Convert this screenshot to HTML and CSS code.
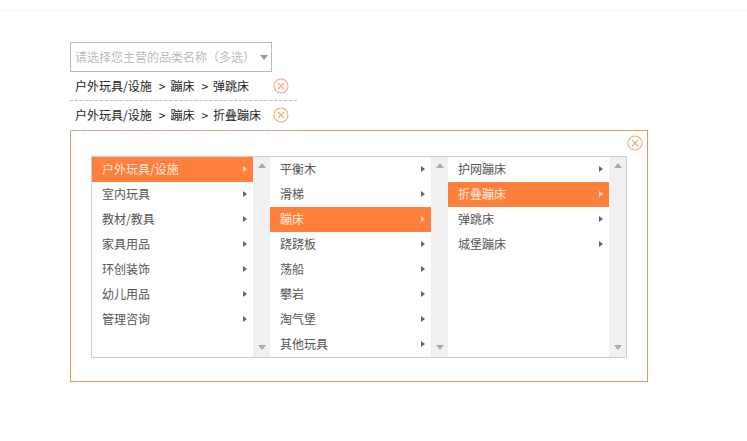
FILE: index.html
```html
<!doctype html>
<html>
<head>
<meta charset="utf-8">
<title>品类选择</title>
<link rel="stylesheet" href="styles.css">
</head>
<body>
<div class="page">
	<div class="select">
		<span class="select-text">请选择您主营的品类名称（多选）</span>
		<i class="select-caret"></i>
	</div>
	<ul class="picked">
		<li>
			<span class="path">户外玩具/设施<em>&gt;</em>蹦床<em>&gt;</em>弹跳床</span>
			<svg class="close close-row" viewBox="0 0 16 16"><circle cx="8" cy="8" r="7"/><path d="M5 5l6 6M11 5l-6 6"/></svg>
		</li>
		<li>
			<span class="path">户外玩具/设施<em>&gt;</em>蹦床<em>&gt;</em>折叠蹦床</span>
			<svg class="close close-row" viewBox="0 0 16 16"><circle cx="8" cy="8" r="7"/><path d="M5 5l6 6M11 5l-6 6"/></svg>
		</li>
	</ul>
	<div class="panel">
		<svg class="close close-panel" viewBox="0 0 16 16"><circle cx="8" cy="8" r="7"/><path d="M5 5l6 6M11 5l-6 6"/></svg>
		<div class="cols">
			<div class="col">
				<ul class="list">
					<li class="on">户外玩具/设施</li>
					<li>室内玩具</li>
					<li>教材/教具</li>
					<li>家具用品</li>
					<li>环创装饰</li>
					<li>幼儿用品</li>
					<li>管理咨询</li>
				</ul>
				<div class="bar"><i class="up"></i><i class="down"></i></div>
			</div>
			<div class="col">
				<ul class="list">
					<li>平衡木</li>
					<li>滑梯</li>
					<li class="on">蹦床</li>
					<li>跷跷板</li>
					<li>荡船</li>
					<li>攀岩</li>
					<li>淘气堡</li>
					<li>其他玩具</li>
				</ul>
				<div class="bar"><i class="up"></i><i class="down"></i></div>
			</div>
			<div class="col">
				<ul class="list">
					<li>护网蹦床</li>
					<li class="on">折叠蹦床</li>
					<li>弹跳床</li>
					<li>城堡蹦床</li>
				</ul>
				<div class="bar"><i class="up"></i><i class="down"></i></div>
			</div>
		</div>
	</div>
</div>
</body>
</html>
```

FILE: styles.css
```css
*{ margin:0; padding:0; list-style:none; box-sizing:border-box;}
body{ background:#fff; font:12px/1.2 "Noto Sans CJK SC","Liberation Sans",sans-serif; color:#555;}

.page{ margin-top:10px; border-top:1px solid #eee; padding:31px 0 0 70px;}

.select{ width:202px; height:30px; border:1px solid #bbb; display:flex; align-items:center; justify-content:space-between; padding:0 2px 0 4px;}
.select-text{ color:#bbb;}
.select-caret{ border:4px solid transparent; border-top:5px solid #999; border-bottom:0; margin-right:1px;}

.picked{ width:227px; margin-bottom:-1px; position:relative; z-index:1;}
.picked li{ height:29px; border-bottom:1px dashed #bbb; display:flex; align-items:center; padding:0 0 0 5px; position:relative; color:#222;}
.picked li:last-child{ height:30px; padding-bottom:1px;}
.path em{ font-style:normal; margin:0 5px 0 7px;}

.close{ width:16px; height:16px; fill:none; stroke:#f0a878; stroke-width:1.1;}
.close-row{ position:absolute; left:203px; top:6px;}
.close-panel{ position:absolute; right:4px; top:4px;}

.panel{ width:578px; height:252px; border:1px solid #f0905a; padding:25px 20px 0 20px; position:relative; background:#fff;}
.cols{ width:536px; height:202px; border:1px solid #ccc; display:flex;}
.col{ width:178px; display:flex;}
.list{ width:161px;}
.list li{ height:25px; line-height:24px; padding-left:10px; position:relative; color:#555;}
.list li:after{ content:""; position:absolute; right:6px; top:9px; border:3.5px solid transparent; border-left:4px solid #666; border-right:0;}
.list li.on{ background:#ff7f3c; color:#ffe9dc;}
.list li.on:after{ border-left-color:#ffd8c0;}

.bar{ width:17px; background:#f0f0f0; display:flex; flex-direction:column; justify-content:space-between; align-items:center; padding:6px 0 7px;}
.bar i{ display:block; border:4px solid transparent;}
.bar .up{ border-bottom:5px solid #aaa; border-top:0;}
.bar .down{ border-top:5px solid #aaa; border-bottom:0;}
```
